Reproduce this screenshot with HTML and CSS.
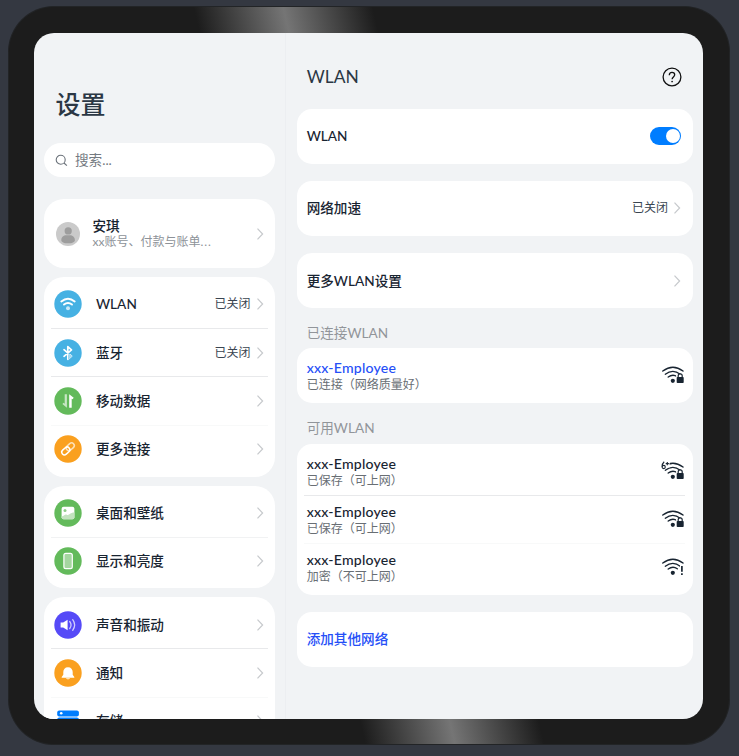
FILE: index.html
```html
<!DOCTYPE html>
<html lang="zh-CN">
<head>
<meta charset="utf-8">
<title>设置</title>
<link rel="stylesheet" href="styles.css">
</head>
<body>
<svg class="defs" aria-hidden="true">
  <symbol id="chevron" viewBox="0 0 8 14"><path d="M1.500 1.700 6.600 7l-5.100 5.300" fill="none" stroke="#c6c9cc" stroke-width="1.200"/></symbol>
  <symbol id="signal" viewBox="0 0 24 20">
    <g fill="none" stroke="#182431" stroke-width="1.400" stroke-linecap="round"><path d="M1.800 6Q11.900-1.500 22 6"/><path d="M4.300 9.200Q11.900 3.600 19.200 9.200"/><path d="M7.200 12Q11.900 8.600 16.300 11.800"/></g>
    <circle cx="11.800" cy="15.800" r="2.100" fill="#182431"/>
  </symbol>
  <symbol id="lock" viewBox="0 0 24 20">
    <rect x="15.100" y="9.300" width="8.200" height="9.700" rx="1" fill="#fff"/>
    <path d="M17.200 12.500v-1.700a2 2 0 0 1 4 0v1.700" fill="none" stroke="#182431" stroke-width="1.200"/>
    <rect x="15.700" y="12" width="7" height="6" rx=".8" fill="#182431"/>
  </symbol>
</svg>
<div class="device">
  <div class="screen">
    <aside class="sidebar">
      <h1>设置</h1>
      <div class="search">
        <svg width="13" height="13" viewBox="0 0 13 13"><g fill="none" stroke="#6b727a" stroke-width="1.100"><circle cx="5.700" cy="5.700" r="4.500"/><path d="m9 9 2.900 2.600"/></g></svg>
        <span>搜索...</span>
      </div>
      <section class="card account">
        <svg width="24" height="24" viewBox="0 0 24 24"><circle cx="12" cy="12" r="12" fill="#cacaca"/><circle cx="12.200" cy="8.900" r="3.600" fill="#9d9d9d"/><path d="M5.300 18.200c0-3.200 2.400-4.900 5-4.900h3.500c2.700 0 5.100 1.700 5.100 4.900 0 2-3 3.100-6.800 3.100s-6.800-1.100-6.800-3.100z" fill="#9d9d9d"/></svg>
        <div class="who"><b>安琪</b><small>xx账号、付款与账单<span class="dots">...</span></small></div>
        <svg class="chev"><use href="#chevron"/></svg>
      </section>
      <section class="card group">
        <div class="item">
          <svg class="ico" viewBox="0 0 28 28"><circle cx="14" cy="14" r="13.700" fill="#46b1e3"/><g fill="none" stroke="#fff" stroke-width="1.900" stroke-linecap="round"><path d="M7.300 11.400Q14 5.900 20.700 11.400"/><path d="M10 14.600Q14 11.400 18 14.600"/></g><circle cx="14" cy="18.200" r="2" fill="#c9e9f8"/></svg>
          <span>WLAN</span><em>已关闭</em><svg class="chev"><use href="#chevron"/></svg>
        </div>
        <div class="item">
          <svg class="ico" viewBox="0 0 28 28"><circle cx="14" cy="14" r="13.700" fill="#46b1e3"/><path d="m10 10.700 7.500 6.400-3.700 3.200V7.700l3.700 3.200L10 17.300" fill="none" stroke="#fff" stroke-width="1.700" stroke-linejoin="round" stroke-linecap="round"/><path d="m14.600 14.600 3.800 2.500-4.400 3.900v-4z" fill="#a3d8f1"/></svg>
          <span>蓝牙</span><em>已关闭</em><svg class="chev"><use href="#chevron"/></svg>
        </div>
        <div class="item">
          <svg class="ico" viewBox="0 0 28 28"><circle cx="14" cy="14" r="13.700" fill="#63ba5b"/><path d="M12.900 7.200v13.500L8.400 17l1.200-1.200 1.100.9V7.200z" fill="#c7e6c4"/><path d="M15.200 20.700V7.200l4.500 3.600-1.100 1.500-.9-.6v9z" fill="#fff"/></svg>
          <span>移动数据</span><svg class="chev"><use href="#chevron"/></svg>
        </div>
        <div class="item faint">
          <svg class="ico" viewBox="0 0 28 28"><circle cx="14" cy="14" r="13.700" fill="#faa01f"/><g fill="none" stroke-width="1.500" stroke-linecap="round"><rect x="11.700" y="9.100" width="9" height="5.400" rx="2.700" transform="rotate(-42 16.200 11.800)" stroke="#fde1b7"/><rect x="7.300" y="13.200" width="9" height="5.400" rx="2.700" transform="rotate(-42 11.800 15.900)" stroke="#fff"/></g></svg>
          <span>更多连接</span><svg class="chev"><use href="#chevron"/></svg>
        </div>
      </section>
      <section class="card group">
        <div class="item">
          <svg class="ico" viewBox="0 0 28 28"><circle cx="14" cy="14" r="13.700" fill="#63ba5b"/><rect x="7.600" y="7.800" width="12.800" height="12.400" rx="2" fill="#fff"/><path d="M7.600 17.600c3-1.200 3.600-2.800 5.200-1.800 2 1.100 3.200-2.400 7.600-2.300v4.700a2 2 0 0 1-2 2H9.600a2 2 0 0 1-2-2z" fill="#c3e3bf"/><circle cx="11" cy="11.400" r="1.500" fill="#8fcd89"/></svg>
          <span>桌面和壁纸</span><svg class="chev"><use href="#chevron"/></svg>
        </div>
        <div class="item light">
          <svg class="ico" viewBox="0 0 28 28"><circle cx="14" cy="14" r="13.700" fill="#63ba5b"/><rect x="9.900" y="6.400" width="8.400" height="15.200" rx="1.900" fill="#a5d6a0" stroke="#fff" stroke-width="1.200"/></svg>
          <span>显示和亮度</span><svg class="chev"><use href="#chevron"/></svg>
        </div>
      </section>
      <section class="card group">
        <div class="item">
          <svg class="ico" viewBox="0 0 28 28"><circle cx="14" cy="14" r="13.700" fill="#564af7"/><path d="M6.600 11.600h2.600L13.600 8.700v10.600l-4.400-2.900H6.600z" fill="#fff"/><g fill="none" stroke="#d0cdfd" stroke-width="1.300" stroke-linecap="round"><path d="M15.700 10.500q2.700 3.500 0 7"/><path d="M18.700 8.700q3.900 5.300 0 10.600"/></g></svg>
          <span>声音和振动</span><svg class="chev"><use href="#chevron"/></svg>
        </div>
        <div class="item">
          <svg class="ico" viewBox="0 0 28 28"><circle cx="14" cy="14" r="13.700" fill="#faa01f"/><path d="M14 8.200c-3 0-4.700 2.100-4.700 4.900v2.700l-1.600 2.100v.8h12.600v-.8l-1.600-2.100v-2.700c0-2.800-1.700-4.900-4.700-4.900z" fill="#fff"/><path d="M11.800 19h4.400q-.5 1.400-2.200 1.400T11.800 19z" fill="#fde1b7"/></svg>
          <span>通知</span><svg class="chev"><use href="#chevron"/></svg>
        </div>
        <div class="item faint">
          <svg class="ico" viewBox="0 0 28 28"><g fill="#007dff"><rect x="3.200" y="3.400" width="21.700" height="6" rx="2"/><rect x="3.200" y="10.500" width="21.700" height="6.100" rx="2"/></g><circle cx="7.200" cy="6.200" r="1.300" fill="#fff"/></svg>
          <span>存储</span><svg class="chev"><use href="#chevron"/></svg>
        </div>
      </section>
    </aside>
    <main>
      <header><h2>WLAN</h2>
        <svg width="20" height="20" viewBox="0 0 20 20"><g fill="none" stroke="#111" stroke-width="1.300"><circle cx="10" cy="10" r="8.900"/><path d="M7.300 8.200c0-1.800 1.100-2.900 2.700-2.900s2.700 1 2.700 2.500c0 2.100-2.600 2.200-2.600 4.400"/></g><circle cx="10.100" cy="14.500" r=".85" fill="#111"/></svg>
      </header>
      <section class="card single"><span>WLAN</span><i class="switch"></i></section>
      <section class="card single"><span>网络加速</span><em>已关闭</em><svg class="chev"><use href="#chevron"/></svg></section>
      <section class="card single"><span>更多WLAN设置</span><svg class="chev"><use href="#chevron"/></svg></section>
      <h3>已连接WLAN</h3>
      <section class="card nets connected">
        <div class="net"><div><b>xxx-Employee</b><small>已连接（网络质量好）</small></div>
          <svg width="24" height="20"><use href="#signal"/><use href="#lock"/></svg></div>
      </section>
      <h3>可用WLAN</h3>
      <section class="card nets">
        <div class="net"><div><b>xxx-Employee</b><small>已保存（可上网）</small></div>
          <svg width="24" height="20" viewBox="0 0 24 20"><use href="#signal"/><path d="M0 0h8.600v6.500H5.500L2 9H0z" fill="#fff"/><g fill="none" stroke="#182431" stroke-width="1.100"><path d="M3.200.8Q1.100 2.500 1.100 5.700"/><circle cx="2.700" cy="6" r="1.600"/><path d="M4.700 2.600h3.200M6.300 1v3.200"/></g><use href="#lock"/></svg></div>
        <div class="net"><div><b>xxx-Employee</b><small>已保存（可上网）</small></div>
          <svg width="24" height="20"><use href="#signal"/><use href="#lock"/></svg></div>
        <div class="net faint"><div><b>xxx-Employee</b><small>加密（不可上网）</small></div>
          <svg width="24" height="20" viewBox="0 0 24 20"><use href="#signal"/><path d="M19 8h4V20h-4z" fill="#fff"/><path d="M20.900 9v5.700m0 1.500v1.700" stroke="#182431" stroke-width="1.700"/></svg></div>
      </section>
      <section class="card single add"><span>添加其他网络</span></section>
    </main>
  </div>
</div>
</body>
</html>
```
FILE: styles.css
```css
* { box-sizing: border-box; margin: 0; }
html, body { height: 100%; overflow: hidden; }
body {
  background: #343841;
  padding: 6px 9px 11px 7.500px;
  font: 500 13.600px/20px Lato, "Noto Sans CJK SC", sans-serif;
  color: #182431;
}
.defs { display: none; }
svg { display: block; flex: none; }
b { font-weight: 500; }
em, small { font-style: normal; font-weight: 400; }

.device {
  height: 739px;
  padding: 27px;
  padding-left: 26.500px;
  padding-bottom: 26px;
  border-radius: 46px;
  background:
    linear-gradient(77deg, transparent 2%, #1c1c1c 3%, #757575 50%, #1c1c1c 97%, transparent 98%) 186px 0 / 184px 27px no-repeat,
    linear-gradient(77deg, transparent 2%, #1c1c1c 3%, #757575 50%, #1c1c1c 97%, transparent 98%) 352px 100% / 184px 27px no-repeat,
    #1c1c1c;
  box-shadow: inset 0 0 0 1px #222426;
}
.screen {
  display: flex;
  height: 686px;
  border-radius: 20px;
  overflow: hidden;
  background: #f1f3f5;
}
.sidebar {
  width: 252px;
  height: 686px;
  padding: 0 10px 0 10.400px;
  border-right: 1px solid #eceef1;
  overflow: hidden;
}
h1 { font-size: 25px; line-height: 36px; font-weight: 500; margin: 53px 0 21px 11px; color: #2b3744; }
.card { background: #fff; border-radius: 20px; }
.search {
  display: flex;
  align-items: center;
  gap: 7px;
  height: 34px;
  padding-left: 10.600px;
  border-radius: 17px;
  background: #fff;
  color: #747a81;
  font-weight: 400;
}
.account { display: flex; align-items: center; height: 69px; margin-top: 22px; padding: 0 11.500px 0 11.600px; }
.who { flex: 1; margin-left: 12.500px; }
.who b, .who small, .net b, .net small { display: block; line-height: 16px; }
.who small { font-size: 12px; color: #8d9298; white-space: nowrap; }
.dots { letter-spacing: 1px; }
.chev { width: 8px; height: 14px; }
.group { margin-top: 9px; padding: 3px 11.500px 3px 9.600px; }
.item, .net { display: flex; align-items: center; height: 48.400px; position: relative; }
.item + .item::before, .net + .net::before {
  content: "";
  position: absolute;
  top: -.4px;
  left: -3px;
  right: -4px;
  height: 1px;
  background: #e8e9eb;
}
.item.light::before { background: #f1f2f3; }
.item.faint::before, .net.faint::before { background: #f8f9f9; }
.ico { width: 28px; height: 28px; margin-right: 14px; }
.item span, .single span { flex: 1; }
em { font-size: 12px; color: #3a4551; margin-right: 5px; }

main { flex: 1; padding: 0 10px 0 10.700px; }
header { display: flex; align-items: center; justify-content: space-between; height: 42px; padding: 0 11px 0 10px; margin: 22.500px 0 11px; }
h2 { font-size: 17.400px; font-weight: 400; color: #2b3744; }
main .card { border-radius: 15px; }
.single { display: flex; align-items: center; height: 55px; margin-bottom: 17.250px; padding: 0 12px 0 10px; }
h3 { font-size: 13.600px; font-weight: 400; line-height: 20px; color: #91959a; padding-left: 10px; margin: -2.500px 0 5.500px; }
.switch { width: 31px; height: 18px; padding: 2px; border-radius: 9px; background: #007dff; }
.switch::after { content: ""; display: block; width: 14px; height: 14px; margin-left: 13.500px; border-radius: 50%; background: #fff; }
.nets { padding: 3px 8.500px 3px 10px; margin-bottom: 17.250px; }
.connected { height: 55px; }
.net { justify-content: space-between; }
.net > div { padding-top: 3px; }
.net b { font-size: 14.100px; letter-spacing: .2px; }
.net small { font-size: 12px; line-height: 17px; color: #686e74; }
.net + .net::before { right: 0; }
.connected b, .add { color: #254ff7; }
```
